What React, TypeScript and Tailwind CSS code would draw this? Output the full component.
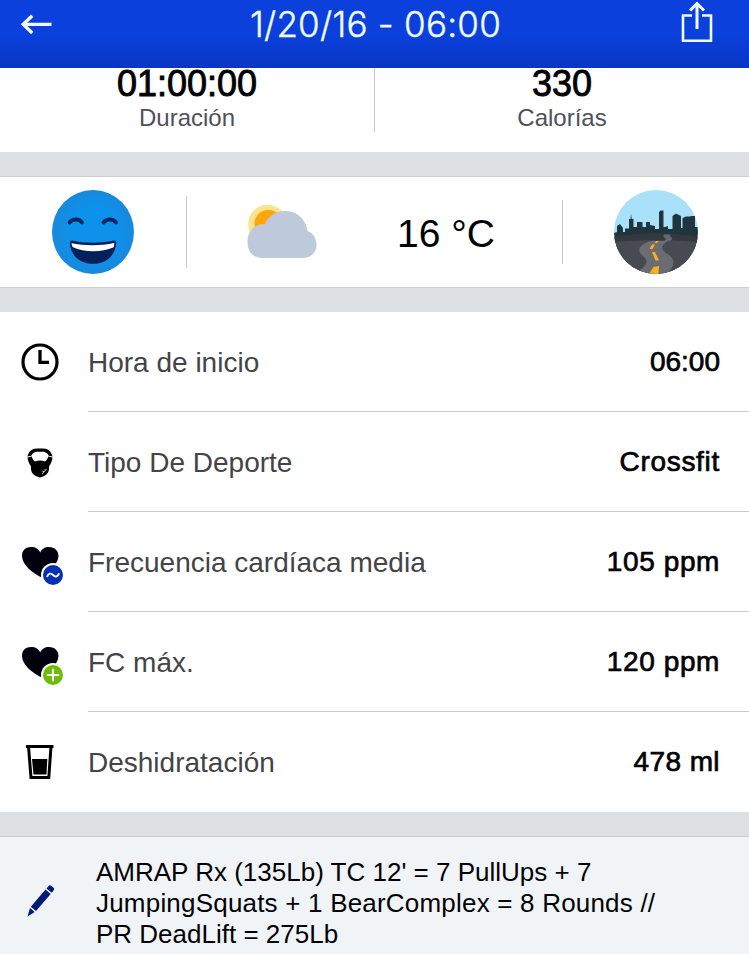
import type { ReactNode } from "react";

function BackArrow() {
  return (
    <svg width="36" height="24" viewBox="18 12 36 24" fill="none" stroke="#effcff" strokeWidth="3.3">
      <path d="M23 24.3H51.5M32.2 15.8L23.200 24.3L32.2 33" />
    </svg>
  );
}

function ShareIcon() {
  return (
    <svg width="36" height="42" viewBox="679 1 36 42" fill="none" stroke="#effcff" strokeWidth="2.6">
      <path d="M692 15.500H683V40.700H711V15.500H702" />
      <path d="M697 29V4M690 10.500L697 3.700L704 10.500" strokeWidth="3" />
    </svg>
  );
}

function HappyFace() {
  return (
    <svg width="82" height="84" viewBox="52 190 82 84">
      <defs>
        <radialGradient id="face">
          <stop offset="0.55" stopColor="#0d92ec" />
          <stop offset="1" stopColor="#1789dc" />
        </radialGradient>
      </defs>
      <ellipse cx="93" cy="232" rx="41" ry="42" fill="url(#face)" />
      <g fill="none" stroke="#042866" strokeWidth="3.8" strokeLinecap="round">
        <path d="M69.500 222.500C72.500 218.500 79.500 218.500 82 222.500" />
        <path d="M103.500 222.500C106.500 218.500 113.500 218.500 116 222.500" />
      </g>
      <path d="M72 240.500C85 243.500 101 243.300 114 240.500Q116.500 240.500 116.200 243.500C115 256 106 263.800 93 263.800S71 256 69.800 243.500Q69.500 240.500 72 240.500Z" fill="#04205c" />
      <path d="M71.500 243.300C85 246 101 245.800 114.300 243Q114.500 246 113.300 247.500C102 252.500 84 252.500 73 247.300Q71.600 246 71.500 243.300Z" fill="#fff" />
    </svg>
  );
}

function CloudySun() {
  return (
    <svg width="70" height="54" viewBox="247 204 70 54">
      <circle cx="267.500" cy="223" r="19.300" fill="#ffe28c" />
      <circle cx="268.500" cy="223" r="14" fill="#ffa50a" />
      <path d="M262 257C253 257 247.500 250.500 247.500 241C247.500 230 254.500 223 265 223C268.500 214.500 276 210 285.500 210C297 210 306 218.500 307.500 230C313 232 316.500 237 316.500 243.500C316.500 251.500 311 257 302.500 257Z" fill="#becada" />
    </svg>
  );
}

function CityRoad() {
  return (
    <svg width="84" height="84" viewBox="614 190 84 84">
      <defs>
        <clipPath id="scene">
          <circle cx="656" cy="232" r="42" />
        </clipPath>
      </defs>
      <g clipPath="url(#scene)">
        <path d="M614 190H698V274H614Z" fill="#a9e1fb" />
        <path
          d="M614 233L617 232V226L620 224L623 228V232H625V228.500H629V219H630.500L631 213.500L631.700 219H633.500V227H637V222H642.500V227H646V222H650V225L655 226V229H659V212L660.500 210.500H663.500V227H665L668 226V229H672.500V216L676 213.500L681 216V228H682.500V218L686 216.500H690L691.500 216H695V227L698 227V250H614Z"
          fill="#21353f"
        />
        <path d="M614 237C642 232 671 232 698 237V274H614Z" fill="#343940" />
        <path d="M614 242C642 239.500 671 239.500 698 242V274H614Z" fill="#484a52" />
        <path d="M664 234.500H670.500C668 237 676 238 670 241H664C669 238 661 237.500 664 234.500Z" fill="#65686e" />
        <path d="M650 241H668C660 246 660 249 669 255C676 260 674 268 666 274H635C644 267 650 264 644 257C636 250 638 246 650 241Z" fill="#6c6d72" />
        <path d="M656 241H659L657 243H654.500ZM652 244.500H655L652.500 249H649.500ZM652 252H655L659 260.500H655.500ZM653.500 267L659 266L658.500 274H649Z" fill="#ffb018" />
      </g>
    </svg>
  );
}

function ClockIcon() {
  return (
    <svg width="38" height="38" viewBox="21 343 38 38" fill="none" stroke="#000">
      <circle cx="40" cy="362" r="17" strokeWidth="3.200" />
      <path d="M40 350V362.300H49" strokeWidth="3.300" />
    </svg>
  );
}

function KettlebellIcon() {
  return (
    <svg width="26" height="30" viewBox="27.5 448.5 26 30">
      <path d="M28 457C29.500 451.500 32.500 449.200 37 449H44C48.500 449.200 51.500 451.500 53 457L49.200 456.300C47.500 452.700 45 452.300 42 452.300H38.500C35.500 452.300 33.500 453 31.700 456.300Z" />
      <path d="M28 458L32.300 457C33 459.500 34 461 35.500 462C38.500 460.500 42.500 460.500 45.500 462C47 461 48 459.500 48.700 457L53 458C52.500 462 51 465 49.500 467C50 472.500 47.500 475.500 44 476.800Q40.500 479 37 476.800C33.500 475.500 31 472.500 31.500 467C30 465 28.500 462 28 458Z" />
      <path d="M42.500 474.500L47 469.500M44.500 472L42.800 471.700M46 470.500L45.300 469.800" stroke="#fff" strokeWidth=".8" />
    </svg>
  );
}

function HeartIcon({ kind }: { kind: "average" | "max" }) {
  return (
    <svg width="43" height="42" viewBox="21 545 43 42">
      <path d="M40.500 577C33 573 22 565 22 556C22 550 26 547 31 547C35.500 547 39 549 40.200 552.500C41.500 549 45 547 49 547C55 547 58.500 551 58.500 556C58.500 564 48 573 40.500 577Z" fill="#01020d" />
      <circle cx="53" cy="575" r="12" fill="#fff" />
      <circle cx="53" cy="575" r="10" fill={kind === "average" ? "#0730b2" : "#6cbd03"} />
      {kind === "average" ? (
        <path d="M47 577C48.500 572.700 51 573 53 575S57.500 577.500 59.200 573.300" fill="none" stroke="#fff" strokeWidth="1.900" />
      ) : (
        <path d="M46.800 575H59.200M53 568.800V581.200" stroke="#fff" strokeWidth="2.100" />
      )}
    </svg>
  );
}

function GlassIcon() {
  return (
    <svg width="28" height="36" viewBox="26 744 28 36">
      <path d="M28.500 746.500H51L48.800 777.500H31Z" fill="none" stroke="#000" strokeWidth="3" />
      <path d="M26 745H53.500V748H26Z" />
      <path d="M32 759H47.300L46.500 774.500H33.500Z" />
    </svg>
  );
}

function PencilIcon() {
  return (
    <svg width="28" height="32" viewBox="27 885 28 32" fill="#001a77">
      <path d="M48.200 886.500Q49.800 884.500 51.500 886L53.500 887.800Q54.800 889 53.500 890.500L51.700 892.700L46.500 888.500Z" />
      <path d="M45.500 889.600L50.700 893.900L36 911L30.800 906.800Z" />
      <path d="M30 908L34.700 912L27.500 916.500Z" />
    </svg>
  );
}

function Stat({ value, label }: { value: string; label: string }) {
  return (
    <div className="flex flex-1 flex-col items-center">
      <div className="text-[36px] leading-8 [-webkit-text-stroke:0.9px]">{value}</div>
      <div className="mt-[5px] text-[24px] leading-[26px] text-[#505158]">{label}</div>
    </div>
  );
}

type RowProps = { icon: ReactNode; label: string; value: string; spacing?: string; last?: boolean };

function DetailRow({ icon, label, value, spacing = "tracking-[0.6px]", last }: RowProps) {
  return (
    <div className="flex h-[100px]">
      <div className="flex w-[88px] shrink-0 items-center pl-[21px]">{icon}</div>
      <div className={`flex flex-1 items-center justify-between pr-[29px] text-[28px] ${last ? "" : "border-b border-[#c8c8cb]"}`}>
        <span className="pt-[2px] text-[#444448]">{label}</span>
        <span className={`${spacing} [-webkit-text-stroke:0.7px]`}>{value}</span>
      </div>
    </div>
  );
}

export default function App() {
  return (
    <div className="flex h-[954px] w-[749px] flex-col bg-[#dee1e4] font-['Liberation_Sans',Arial,sans-serif] text-[#020205]">
      <header className="flex h-[68px] shrink-0 items-start bg-linear-to-b from-[#0b40dc] from-50% to-[#0a36c5] pr-[34px] pl-[18px]">
        <div className="w-[36px] pt-3"><BackArrow /></div>
        <h1 className="flex-1 pt-[4px] pl-[18px] text-center font-['Inter',sans-serif] text-[35px] leading-10 font-light tracking-[0.25px] text-[#effcff] [-webkit-text-stroke:0.4px]">1/20/16 - 06:00</h1>
        <div className="pt-px"><ShareIcon /></div>
      </header>
      <section className="flex h-[84px] shrink-0 bg-white">
        <Stat value="01:00:00" label="Duración" />
        <div className="h-16 w-px bg-[#c8c8cb]" />
        <Stat value="330" label="Calorías" />
      </section>
      <section className="mt-6 flex h-[112px] shrink-0 items-center border-y border-[#ccced1] bg-white">
        <div className="flex w-[186px] justify-center"><HappyFace /></div>
        <div className="h-[72px] w-px bg-[#c8c8cb]" />
        <div className="flex w-[375px] items-center pl-[60px]">
          <CloudySun />
          <span className="ml-[80px] pt-1 text-[39px] leading-[44px]">16 °C</span>
        </div>
        <div className="h-16 w-px bg-[#c8c8cb]" />
        <div className="flex flex-1 justify-center"><CityRoad /></div>
      </section>
      <section className="mt-6 shrink-0 bg-white">
        <DetailRow icon={<ClockIcon />} label="Hora de inicio" value="06:00" spacing="tracking-normal" />
        <DetailRow icon={<div className="pt-[2px] pl-[6px]"><KettlebellIcon /></div>} label="Tipo De Deporte" value="Crossfit" spacing="tracking-[0.7px]" />
        <DetailRow icon={<div className="pt-2"><HeartIcon kind="average" /></div>} label="Frecuencia cardíaca media" value="105 ppm" />
        <DetailRow icon={<div className="pt-2"><HeartIcon kind="max" /></div>} label="FC máx." value="120 ppm" />
        <DetailRow icon={<div className="pl-[5px]"><GlassIcon /></div>} label="Deshidratación" value="478 ml" spacing="tracking-[0.4px]" last />
      </section>
      <section className="mt-6 flex flex-1 border-t border-[#c9ccd0] bg-[#f0f4f7]">
        <div className="w-24 shrink-0 pt-12 pl-[27px]"><PencilIcon /></div>
        <p className="pt-5 text-[26px] leading-[31px] whitespace-nowrap">
          AMRAP Rx (135Lb) TC 12' = 7 PullUps + 7<br />
          <span className="tracking-[0.2px]">JumpingSquats + 1 BearComplex = 8 Rounds //</span><br />
          PR DeadLift = 275Lb
        </p>
      </section>
    </div>
  );
}
